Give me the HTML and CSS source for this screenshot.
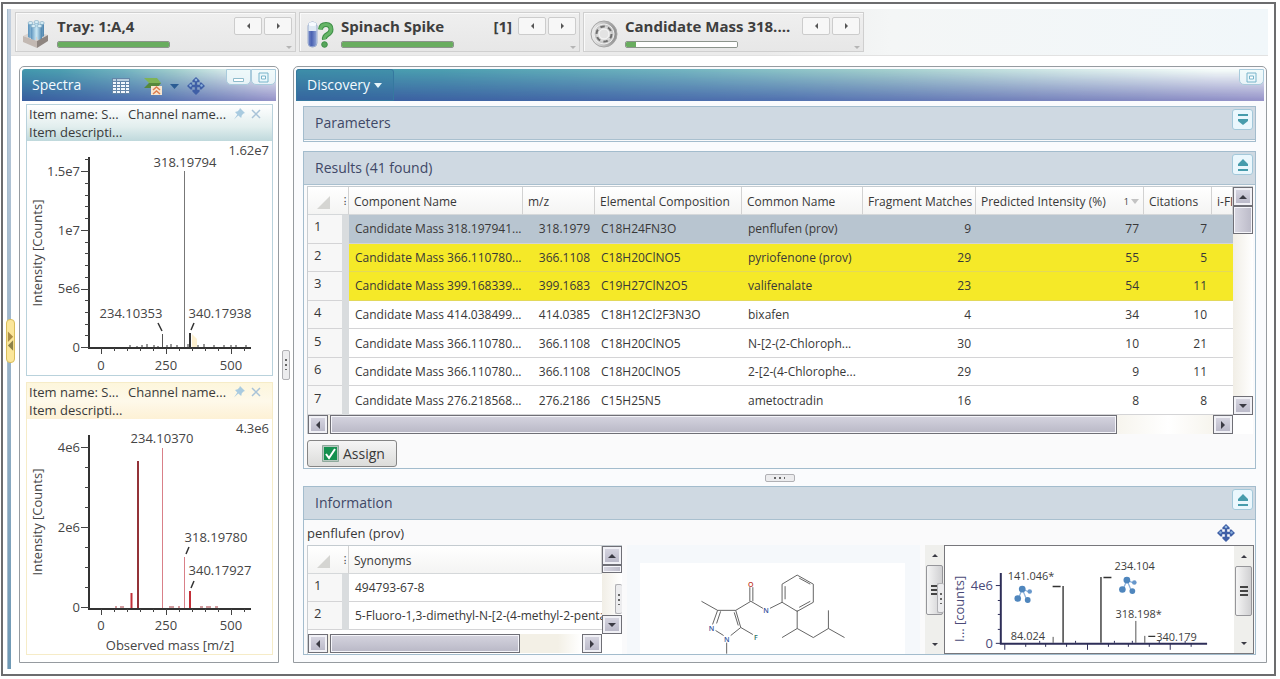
FILE: index.html
```html
<!DOCTYPE html>
<html lang="en">
<head>
<meta charset="utf-8">
<title>Discovery</title>
<link rel="stylesheet" href="styles.css">
</head>
<body>
<svg class="defs" aria-hidden="true">
  <defs>
    <linearGradient id="steel" x1="0" x2="1" y1="0" y2="0"><stop offset="0" stop-color="#f2f2f2"/><stop offset="1" stop-color="#8c8c8c"/></linearGradient>
    <linearGradient id="tube" x1="0" x2="1" y1="0" y2="0"><stop offset="0" stop-color="#5b93bd"/><stop offset=".5" stop-color="#cdeaf6"/><stop offset="1" stop-color="#4c83ad"/></linearGradient>
    <linearGradient id="vial" x1="0" x2="1" y1="0" y2="0"><stop offset="0" stop-color="#6f83c4"/><stop offset=".4" stop-color="#4a62b2"/><stop offset="1" stop-color="#8ea2d4"/></linearGradient>
    <symbol id="move" viewBox="0 0 18 18">
      <path d="M9 2v14M2 9h14" stroke="#3f5fa6" stroke-width="2.4"/>
      <path d="M9 0l3.6 3.6v1.6H5.4V3.6zM9 18l3.6-3.600v-1.600H5.400v1.600zM0 9l3.600-3.600h1.600v7.200H3.600zM18 9l-3.600-3.600h-1.600v7.200h1.600z" fill="#3f5fa6"/>
      <circle cx="9" cy="3" r="1.300" fill="#8db3dd"/><circle cx="3.500" cy="8.500" r="1.200" fill="#8db3dd"/><circle cx="14.500" cy="8.500" r="1.200" fill="#8db3dd"/>
    </symbol>
    <symbol id="pin" viewBox="0 0 12 12"><path d="M7 0l5 5-1.500.6L8.800 7.300 8.200 10 5.300 7.500 1 11.500 4.300 6.600 2 4l2.700-.7L6.400 1.600z" fill="#a9cbe0"/></symbol>
    <symbol id="cross" viewBox="0 0 10 10"><path d="M1 1l8 8M9 1L1 9" stroke="#a9c3d8" stroke-width="1.500"/></symbol>
    <symbol id="maximize" viewBox="0 0 11 11"><path d="M1 1h9v9H1z" fill="#eaf7fb" stroke="#78b4ca"/><path d="M3.500 4h4v3h-4z" fill="#fff" stroke="#78b4ca"/></symbol>
    <symbol id="cluster" viewBox="0 0 18 18">
      <path d="M8 4L4 14M8 4l5 12M8 4l7 3" stroke="#8fb4dc" stroke-width="1.300"/>
      <circle cx="8" cy="4" r="3.400" fill="#4f86bd"/><circle cx="3.500" cy="13.500" r="3.300" fill="#4f86bd"/><circle cx="13.500" cy="15" r="2.900" fill="#4f86bd"/><circle cx="15.500" cy="6.500" r="2.300" fill="#6797cb"/>
    </symbol>
  </defs>
</svg>

<div class="app">
  <div class="rail"><button class="rail-handle" aria-label="Expand side bar"><svg viewBox="0 0 8 30"><path d="M1 9v12l6-6z" fill="#ab8d45" transform="translate(0 -5)"/><path d="M7 9v12l-6-6z" fill="#8d8249" transform="translate(0 5)"/></svg></button></div>
  <div class="main">
    <header class="toolbar">
      <section class="context">
        <svg class="context-icon" viewBox="0 0 28 28">
          <path d="M1 16l10-5 15 4-11 6z" fill="#d9d3cf"/><path d="M6 3v14q2.500 2 5 0V3zM12 2v14q2.500 2 5 0V2zM18 3v13q2 2 4 0V3z" fill="url(#tube)"/><path d="M9 6v14q2.500 2 5 0V6zM15 6v13q2.500 2 5 0V6z" fill="url(#tube)"/>
          <path d="M1 16l14 5v7L1 22z" fill="#c3b9b3"/><path d="M15 21l11-6v6l-11 7z" fill="#8e8580"/>
          <g fill="#d9eef6" stroke="#7ba4bd" stroke-width=".6"><ellipse cx="8.500" cy="3" rx="2.500" ry="1.500"/><ellipse cx="14.500" cy="2" rx="2.500" ry="1.500"/><ellipse cx="20" cy="3" rx="2.200" ry="1.500"/><ellipse cx="11.500" cy="6" rx="2.500" ry="1.500"/><ellipse cx="17.500" cy="6" rx="2.500" ry="1.500"/></g>
        </svg>
        <div class="context-text"><div class="context-name"><b>Tray: 1:A,4</b></div><progress class="meter" max="100" value="100" aria-label="Tray"></progress></div>
        <div class="context-nav"><div class="steps"><button class="step prev" aria-label="Previous tray"></button><button class="step next" aria-label="Next tray"></button></div><span class="more"></span></div>
      </section>
      <section class="context">
        <svg class="context-icon" viewBox="0 0 28 28">
          <rect x="2" y="2" width="9" height="25" rx="4" fill="#dfe9f4" stroke="#9aaccc"/><path d="M2.500 11h8v12q0 3.500-4 3.500t-4-3.500z" fill="url(#vial)"/><ellipse cx="6.500" cy="4" rx="4" ry="2" fill="#f7fbff"/>
          <path d="M14.500 9.500Q15 4.500 20 4.500t5 5q0 3-3.500 5t-3 5" fill="none" stroke="#3e8f48" stroke-width="5"/><path d="M14.500 9.500Q15 4.500 20 4.500t5 5q0 3-3.500 5t-3 5" fill="none" stroke="#66b567" stroke-width="3"/><circle cx="18.500" cy="24.500" r="2.800" fill="#56a65a" stroke="#3e8f48"/>
        </svg>
        <div class="context-text"><div class="context-name"><b>Spinach Spike</b><b>[1]</b></div><progress class="meter" max="100" value="100" aria-label="Spinach Spike"></progress></div>
        <div class="context-nav"><div class="steps"><button class="step prev" aria-label="Previous sample"></button><button class="step next" aria-label="Next sample"></button></div><span class="more"></span></div>
      </section>
      <section class="context">
        <svg class="context-icon" viewBox="0 0 28 28">
          <circle cx="14" cy="14" r="13" fill="url(#steel)" stroke="#a5a5a5"/><circle cx="14" cy="14" r="10" fill="#c9c9c9" stroke="#efefef"/><circle cx="14" cy="14" r="7.500" fill="#dadada" stroke="#6f6f6f" stroke-width="2" stroke-dasharray="4.500 3.350"/><circle cx="14" cy="14" r="5" fill="#e3e3e3" stroke="#fafafa"/>
        </svg>
        <div class="context-text"><div class="context-name"><b>Candidate Mass 318....</b></div><progress class="meter" max="100" value="9" aria-label="Candidate Mass"></progress></div>
        <div class="context-nav"><div class="steps"><button class="step prev" aria-label="Previous candidate"></button><button class="step next" aria-label="Next candidate"></button></div><span class="more"></span></div>
      </section>
    </header>

    <div class="workspace">
      <section class="panel spectra">
        <header class="panel-head">
          <h2 class="panel-title">Spectra</h2>
          <div class="tools">
            <button class="tool" aria-label="Table"><svg width="18" height="16" viewBox="0 0 18 16"><path d="M0 0h18v16H0z" fill="#6486a8"/><path d="M1 1h3v2H1zM5 1h12v2H5z" fill="#bcd0df"/><path d="M1 4h3v2H1zM5 4h3v2H5zM9 4h4v2H9zM14 4h3v2h-3zM1 7h3v2H1zM5 7h3v2H5zM9 7h4v2H9zM14 7h3v2h-3zM1 10h3v2H1zM5 10h3v2H5zM9 10h4v2H9zM14 10h3v2h-3zM1 13h3v2H1zM5 13h3v2H5zM9 13h4v2H9zM14 13h3v2h-3z" fill="#f3f8fc"/></svg></button>
            <button class="tool" aria-label="Export"><svg width="18" height="18" viewBox="0 0 18 18"><path d="M0 1h13l4 5H5z" fill="#7eb356"/><path d="M5 6h12l-4 5H0z" fill="#55883c"/><path d="M7 9h11v9H7z" fill="#f6e6d0"/><path d="M9 13l3.500-3 3.500 3M9 17l3.500-3 3.500 3" fill="none" stroke="#dc7c4d" stroke-width="1.500"/></svg></button>
            <button class="tool caret" aria-label="Export options"><svg width="9" height="5" viewBox="0 0 9 5"><path d="M0 0h9L4.500 5z" fill="#2b5c93"/></svg></button>
            <button class="tool" aria-label="Move"><svg width="18" height="18"><use href="#move"/></svg></button>
          </div>
          <div class="window-buttons"><button class="window-button" aria-label="Minimize"><svg width="11" height="11" viewBox="0 0 11 11"><path d="M.5 6.500h10v3H.5z" fill="#fff" stroke="#8fbccc"/></svg></button><button class="window-button" aria-label="Maximize"><svg width="11" height="11"><use href="#maximize"/></svg></button></div>
        </header>
        <div class="cards">
          <article class="card">
            <header class="card-head"><div class="card-line"><span class="item-name">Item name: S...</span><span>Channel name...</span><span class="card-actions"><svg width="12" height="12"><use href="#pin"/></svg><svg width="10" height="10"><use href="#cross"/></svg></span></div><div class="card-line">Item descripti...</div></header>
            <svg class="plot" viewBox="27 141 245 234">
              <path d="M89 157v191M88 348h163" stroke="#333" stroke-width="2" fill="none"/>
              <path d="M81 171.500h8M81 230.500h8M81 289.500h8M81 347.500h8M85 159.500h4M85 183.500h4M85 195.500h4M85 206.500h4M85 218.500h4M85 242.500h4M85 253.500h4M85 265.500h4M85 277.500h4M85 300.500h4M85 312.500h4M85 324.500h4M85 335.500h4M101.500 348v6M166.500 348v6M231.500 348v6M114.500 348v3M127.500 348v3M140.500 348v3M153.500 348v3M179.500 348v3M192.500 348v3M205.500 348v3M218.500 348v3M244.500 348v3" stroke="#444"/>
              <path d="M130 347v-2M137 347v-1M142 347v-2M147 347v-3M154 347v-2M158 347v-1M167 347v-2M171 347v-3M177 347v-2M188 347v-3M194 347v-4M198 347v-2M204 347v-3M214 347v-2M224 347v-2M231 347v-2M236 347v-2M246 347v-2" stroke="#333"/>
              <path d="M192 334l5 5v8h-5z" fill="#fdf0cf"/>
              <path d="M184.500 171v176" stroke="#777"/><path d="M162.500 334v13" stroke="#555"/><path d="M190 333v14" stroke="#333" stroke-width="2"/>
              <path d="M158 323l4 8M194 323l-3 7" stroke="#333" stroke-width="1.500"/>
              <g class="plot-text"><text x="269" y="155" text-anchor="end">1.62e7</text><text x="185" y="167" text-anchor="middle">318.19794</text><text x="131" y="318" text-anchor="middle">234.10353</text><text x="220" y="318" text-anchor="middle">340.17938</text>
              <g text-anchor="end"><text x="80" y="176">1.5e7</text><text x="80" y="235">1e7</text><text x="80" y="293">5e6</text><text x="80" y="352">0</text></g>
              <g text-anchor="middle"><text x="101" y="370">0</text><text x="166" y="370">250</text><text x="231" y="370">500</text><text transform="translate(42 253) rotate(-90)">Intensity [Counts]</text></g></g>
            </svg>
          </article>
          <article class="card selected">
            <header class="card-head"><div class="card-line"><span class="item-name">Item name: S...</span><span>Channel name...</span><span class="card-actions"><svg width="12" height="12"><use href="#pin"/></svg><svg width="10" height="10"><use href="#cross"/></svg></span></div><div class="card-line">Item descripti...</div></header>
            <svg class="plot" viewBox="27 419 245 235">
              <path d="M138 461v147" stroke="#933238" stroke-width="2"/><path d="M131.500 593v15M190 591v17" stroke="#c22f38" stroke-width="2"/><path d="M162.500 448v160M184.500 557v51" stroke="#d98088"/>
              <path d="M89 435v173M88 609h163" stroke="#333" stroke-width="2" fill="none"/>
              <path d="M81 447.500h8M81 527.500h8M81 607.500h8M85 467.500h4M85 487.500h4M85 507.500h4M85 547.500h4M85 567.500h4M85 587.500h4M101.500 609v6M166.500 609v6M231.500 609v6M114.500 609v3M127.500 609v3M140.500 609v3M153.500 609v3M179.500 609v3M192.500 609v3M205.500 609v3M218.500 609v3M244.500 609v3" stroke="#444"/>
              <path d="M115 607h2M120 607h4M169 607h5M178 607h2M200 607h3M206 607h5M215 607h3" stroke="#a63a40"/>
              <path d="M189 547l-3 7M194 581l-3 7" stroke="#333" stroke-width="1.500"/>
              <g class="plot-text"><text x="269" y="433" text-anchor="end">4.3e6</text><text x="162" y="443" text-anchor="middle">234.10370</text><text x="216" y="542" text-anchor="middle">318.19780</text><text x="220" y="575" text-anchor="middle">340.17927</text>
              <g text-anchor="end"><text x="80" y="452">4e6</text><text x="80" y="532">2e6</text><text x="80" y="612">0</text></g>
              <g text-anchor="middle"><text x="101" y="630">0</text><text x="166" y="630">250</text><text x="231" y="630">500</text><text x="170" y="650">Observed mass [m/z]</text><text transform="translate(42 522) rotate(-90)">Intensity [Counts]</text></g></g>
            </svg>
          </article>
        </div>
      </section>

      <div class="splitter"><span class="grip vertical"></span></div>

      <section class="panel discovery">
        <header class="panel-head">
          <button class="tab">Discovery<svg width="8" height="5" viewBox="0 0 8 5"><path d="M0 0h8L4 5z" fill="#e8f6fa"/></svg></button>
          <div class="window-buttons"><button class="window-button" aria-label="Maximize"><svg width="11" height="11"><use href="#maximize"/></svg></button></div>
        </header>
        <div class="sections">
          <section class="section collapsed">
            <header class="section-head"><h3 class="section-title">Parameters</h3><button class="fold" aria-label="Expand Parameters"><svg width="12" height="12" viewBox="0 0 12 12"><path d="M1 0h10v2H1zM1 5h10v2l-5 4-5-4z" fill="#479cac"/></svg></button></header>
          </section>
          <section class="section results">
            <header class="section-head"><h3 class="section-title">Results (41 found)</h3><button class="fold" aria-label="Collapse Results"><svg width="12" height="12" viewBox="0 0 12 12"><path d="M1 10h10v2H1zM1 5l5-5 5 5v2H1z" fill="#479cac"/></svg></button></header>
            <div class="section-body">
              <div class="grid">
                <div class="viewport">
                  <table class="table results-table">
                    <colgroup><col class="c-num"><col class="c-grip"><col class="c-name"><col class="c-mz"><col class="c-comp"><col class="c-common"><col class="c-frag"><col class="c-int"><col class="c-cit"><col class="c-fit"></colgroup>
                    <thead><tr><th class="corner"><svg width="13" height="13" viewBox="0 0 13 13"><path d="M13 0v13H0z" fill="#d5d5d2"/></svg></th><th class="dots">⁝</th><th>Component Name</th><th>m/z</th><th>Elemental Composition</th><th>Common Name</th><th>Fragment Matches</th><th><span class="sorted">Predicted Intensity (%)<span class="order">1<svg width="8" height="5" viewBox="0 0 8 5"><path d="M0 0h8L4 5z" fill="#c3c3c3"/></svg></span></span></th><th>Citations</th><th>i-FIT</th></tr></thead>
                    <tbody>
                      <tr class="picked"><td class="num">1</td><td class="rule"></td><td>Candidate Mass 318.197941...</td><td class="n">318.1979</td><td>C18H24FN3O</td><td>penflufen (prov)</td><td class="n">9</td><td class="n">77</td><td class="n">7</td><td></td></tr>
                      <tr class="marked"><td class="num">2</td><td class="rule"></td><td>Candidate Mass 366.110780...</td><td class="n">366.1108</td><td>C18H20ClNO5</td><td>pyriofenone (prov)</td><td class="n">29</td><td class="n">55</td><td class="n">5</td><td></td></tr>
                      <tr class="marked"><td class="num">3</td><td class="rule"></td><td>Candidate Mass 399.168339...</td><td class="n">399.1683</td><td>C19H27ClN2O5</td><td>valifenalate</td><td class="n">23</td><td class="n">54</td><td class="n">11</td><td></td></tr>
                      <tr><td class="num">4</td><td class="rule"></td><td>Candidate Mass 414.038499...</td><td class="n">414.0385</td><td>C18H12Cl2F3N3O</td><td>bixafen</td><td class="n">4</td><td class="n">34</td><td class="n">10</td><td></td></tr>
                      <tr><td class="num">5</td><td class="rule"></td><td>Candidate Mass 366.110780...</td><td class="n">366.1108</td><td>C18H20ClNO5</td><td>N-[2-(2-Chloroph...</td><td class="n">30</td><td class="n">10</td><td class="n">21</td><td></td></tr>
                      <tr><td class="num">6</td><td class="rule"></td><td>Candidate Mass 366.110780...</td><td class="n">366.1108</td><td>C18H20ClNO5</td><td>2-[2-(4-Chlorophe...</td><td class="n">29</td><td class="n">9</td><td class="n">11</td><td></td></tr>
                      <tr><td class="num">7</td><td class="rule"></td><td>Candidate Mass 276.218568...</td><td class="n">276.2186</td><td>C15H25N5</td><td>ametoctradin</td><td class="n">16</td><td class="n">8</td><td class="n">8</td><td></td></tr>
                    </tbody>
                  </table>
                </div>
                <div class="vscroll"><button class="sb up" aria-label="Scroll up"></button><span class="thumb"></span><span class="track"></span><button class="sb down" aria-label="Scroll down"></button></div>
                <div class="hscroll"><button class="sb left" aria-label="Scroll left"></button><span class="thumb"></span><span class="track"></span><button class="sb right" aria-label="Scroll right"></button></div>
              </div>
              <button class="assign"><svg width="17" height="17" viewBox="0 0 17 17"><path d="M.5.500h16v16H.5z" fill="#b5c8be" stroke="#8fa99c"/><path d="M2 2h13v13H2z" fill="#15904f"/><path d="M4 9l3 4 6-9" fill="none" stroke="#fff" stroke-width="2"/></svg>Assign</button>
            </div>
          </section>
          <div class="row-splitter"><span class="grip"></span></div>
          <section class="section info">
            <header class="section-head"><h3 class="section-title">Information</h3><button class="fold" aria-label="Collapse Information"><svg width="12" height="12" viewBox="0 0 12 12"><path d="M1 10h10v2H1zM1 5l5-5 5 5v2H1z" fill="#479cac"/></svg></button></header>
            <div class="info-bar"><span>penflufen (prov)</span><button class="tool" aria-label="Move"><svg width="18" height="18"><use href="#move"/></svg></button></div>
            <div class="info-panes">
              <div class="grid synonyms">
                <div class="viewport">
                  <table class="table">
                    <colgroup><col class="c-num"><col class="c-grip"><col></colgroup>
                    <thead><tr><th class="corner"><svg width="13" height="13" viewBox="0 0 13 13"><path d="M13 0v13H0z" fill="#d5d5d2"/></svg></th><th class="dots">⁝</th><th>Synonyms</th></tr></thead>
                    <tbody><tr><td class="num">1</td><td class="rule"></td><td>494793-67-8</td></tr><tr><td class="num">2</td><td class="rule"></td><td>5-Fluoro-1,3-dimethyl-N-[2-(4-methyl-2-pentanyl)phenyl]</td></tr></tbody>
                  </table>
                </div>
                <div class="vscroll"><button class="sb up" aria-label="Scroll up"></button><span class="thumb"></span><span class="track"></span><button class="sb down" aria-label="Scroll down"></button><span class="grip vertical over"></span></div>
                <div class="hscroll"><button class="sb left" aria-label="Scroll left"></button><span class="thumb"></span><span class="track"></span><button class="sb right" aria-label="Scroll right"></button></div>
              </div>
              <div class="structure">
                <div class="canvas">
                  <svg class="molecule" viewBox="641 564 263 90">
                    <path fill="none" stroke="#555" stroke-width=".9" d="M702 602l16 9h18M718 611l-5 14M721 612l-4 12M716 631l8 5M731 636l10-8-5-17M738.500 626l-4-13M741 628l12 7M727 643v11M736 611l15-9M750 602v-14M753 602v-14M751 602l12 7M770 609l12-6M782 603v-18l15-9 16 9v18l-16 9zM785 600v-13M799 579l11 6M799 608l11-6M797 611v18l-15 9M797 629l16 9 15-9v-18M828 629l16 9"/>
                    <g class="atoms"><text x="751" y="588" fill="#c0392b">O</text><text x="766" y="614" fill="#34519b">N</text><text x="712" y="632" fill="#34519b">N</text><text x="727" y="642" fill="#34519b">N</text><text x="756" y="640" fill="#2d7266">F</text></g>
                  </svg>
                </div>
                <div class="slim"><button class="slim-button up" aria-label="Scroll up"></button><span class="slim-thumb"></span><button class="slim-button down" aria-label="Scroll down"></button><span class="grip vertical over"></span></div>
              </div>
              <div class="fragments">
                <svg class="plot" viewBox="945 546 290 107">
                  <path d="M1001 573v71M1000 644h208" stroke="#2e2e58" stroke-width="2" fill="none"/>
                  <path d="M996 585.500h5M996 643.500h5M998 600.500h3M998 614.500h3M998 629.500h3M1005 644v6M1026 644v3M1046 644v3M1067 644v3M1088 644v6M1109 644v3M1129 644v3M1150 644v3M1171 644v6M1192 644v3M1040 643v-2M1076 643v-2M1115 643v-2M1133 643v-2M1160 643v-2M1186 643v-2" stroke="#2e2e58"/>
                  <path d="M1063.500 586v57M1101.500 577v66" stroke="#444" stroke-width="1.500"/><path d="M1136.500 621v22M1145.500 636v7M1053.500 637v6" stroke="#555"/><path d="M1053 586.500h8M1104 577.500h8M1149 636.500h7" stroke="#333" stroke-width="1.500"/>
                  <use href="#cluster" x="1014" y="585" width="19" height="18"/><use href="#cluster" x="1119" y="576" width="19" height="18"/>
                  <g class="peak-text"><text x="1008" y="580">141.046*</text><text x="1115" y="570">234.104</text><text x="1116" y="618">318.198*</text><text x="1011" y="640">84.024</text><text x="1157" y="641">340.179</text></g>
                  <g class="plot-text axis"><text x="993" y="590" text-anchor="end">4e6</text><text x="993" y="648" text-anchor="end">0</text><text transform="translate(964 609) rotate(-90)" text-anchor="middle">I... [counts]</text></g>
                </svg>
                <div class="slim"><button class="slim-button up" aria-label="Scroll up"></button><span class="slim-thumb"></span><button class="slim-button down" aria-label="Scroll down"></button></div>
              </div>
            </div>
          </section>
        </div>
      </section>
    </div>
  </div>
</div>
</body>
</html>
```
FILE: styles.css
```css
* { box-sizing: border-box; }
body { margin: 0; background: #fff; color: #383838; font: 13px/18px "Open Sans", "Noto Sans", sans-serif; }
button { margin: 0; padding: 0; border: 0; background: none; color: inherit; font: inherit; }
h2, h3 { margin: 0; font-weight: 400; }
svg { display: block; flex: none; }
.defs { position: absolute; width: 0; height: 0; }

.app { display: flex; min-height: calc(100vh - 5px); margin: 2px 4px 0 1px; padding: 5px 6px 5px 4px; border: 2px solid #6c6c6e; }
.rail { position: relative; flex: none; width: 4px; background: linear-gradient(#c3d0df, #9db5c9 50%, #6e98b4); border-left: 1px solid #a7bccd; }
.rail-handle { position: absolute; top: 310px; left: -2px; width: 9px; height: 44px; border: 1px solid #d9bd5c; border-radius: 4px; background: #fbe69a; z-index: 1; }
.rail-handle svg { width: 7px; height: 30px; }
.main { display: flex; flex-direction: column; flex: 1; min-width: 0; }

.toolbar { display: flex; gap: 3px; height: 47px; padding: 3px 4px; background: linear-gradient(90deg, #ebebeb 60%, #f4f6f6 70%, #f1f7fa); border-bottom: 1px solid #e2e2e2; }
.context { display: flex; width: 281px; padding: 4px 3px 0 6px; border: 1px solid #cfcfcf; box-shadow: inset 1px 1px #fafafa; background: linear-gradient(#efefef, #e7e7e7); }
.context-icon { width: 28px; height: 28px; margin: 3px 7px 0 0; }
.context-text { flex: 1; min-width: 0; }
.context-name { display: flex; justify-content: space-between; height: 20px; padding-right: 6px; color: #3e3e3e; font-size: 15px; line-height: 18px; white-space: nowrap; }
.meter { display: block; width: 113px; height: 7px; margin-top: 4px; appearance: none; border: 1px solid #8c948c; border-radius: 2px; overflow: hidden; background: #fff; }
.meter::-webkit-progress-bar { background: #fff; }
.meter::-webkit-progress-value { background: #69ad5f; }
.context-nav { display: flex; flex-direction: column; align-items: flex-end; }
.steps { display: flex; gap: 2px; }
.step { display: grid; place-items: center; width: 28px; height: 18px; border: 1px solid #cccccc; border-radius: 2px; background: #f7f7f7; }
.step::before { content: ""; border: 3px solid transparent; }
.prev::before { border-right-color: #555; border-left-width: 0; }
.next::before { border-left-color: #555; border-right-width: 0; }
.more { margin-top: 11px; border: 3px solid transparent; border-top-color: #b5b5b5; border-bottom-width: 0; }

.workspace { display: flex; padding: 10px 1px 0 8px; margin-bottom: 5px; }
.panel { border: 1px solid #969ba0; border-radius: 5px 5px 0 0; padding: 2px; background: #fff; }
.spectra { width: 260px; flex: none; }
.discovery { flex: 1; min-width: 0; background: #fafbfd; }
.panel-head { position: relative; z-index: 0; display: flex; height: 32px; border-radius: 3px 3px 0 0; color: #f3fbff; background: linear-gradient(90deg, #4297ad, #4c9db0 15%, #72b3c0 40%, #9fcccc 60%, #d3e8e8 80%, #f3faf9 95%); }
.panel-head::before { content: ""; position: absolute; z-index: -1; inset: 0; background: linear-gradient(90deg, #385f9f, #4268a6 25%, #5273b0 50%, #7684bc 75%, #9896ca); mask-image: linear-gradient(transparent 5%, #000 95%); }
.panel-title { width: 90px; padding-left: 10px; font-size: 14px; line-height: 32px; }
.tools { display: flex; align-items: center; gap: 8px; padding-top: 2px; }
.tools .tool:first-child { margin-right: 6px; }
.window-buttons { display: flex; margin-left: auto; }
.window-button { display: grid; place-items: center; width: 25px; height: 16px; border: 1px solid #a9cbdc; border-radius: 0 0 5px 5px; background: rgba(240,250,252,.85); }
.cards { display: flex; flex-direction: column; gap: 6px; padding: 3px 3px 4px 4px; }
.card { border: 1px solid #b9d2dc; }
.card-head { padding: 0 5px 0 2px; color: #3a3a3a; background: linear-gradient(#fff, #e2eeee 60%, #bfd9dc); }
.card-line { display: flex; height: 18px; align-items: center; }
.item-name { width: 99px; }
.card-actions { display: flex; align-items: center; gap: 6px; margin-left: auto; padding-right: 6px; }
.selected { border-color: #f6ecc8; }
.selected .card-head { background: linear-gradient(#fdf6dc, #fef9ea 50%, #fdf1d5); }
.plot { width: 100%; height: auto; }
.plot-text { fill: #454545; font-size: 13px; }
.peak-text { fill: #3d3d3d; font-size: 11px; }
.axis { fill: #4a4a78; }

.splitter { display: flex; align-items: center; justify-content: center; width: 14px; flex: none; }
.grip { position: relative; display: grid; place-items: center; width: 30px; height: 8px; border: 1px solid #b0b0b4; border-radius: 2px; background: #ececee; }
.grip::before { content: ""; width: 11px; height: 2px; background: repeating-linear-gradient(90deg, #666 0 2px, transparent 2px 5px); }
.grip.vertical { width: 8px; height: 30px; }
.grip.vertical::before { width: 2px; height: 11px; background: repeating-linear-gradient(#666 0 2px, transparent 2px 5px); }
.grip.over { position: absolute; right: 0; top: 38px; width: 7px; border-right: 0; }

.tab { display: flex; align-items: center; gap: 4px; width: 98px; padding-left: 10px; border: 1px solid #35789f; border-radius: 3px 3px 0 0; background: rgba(50,120,160,.3); font-size: 14px; }
.sections { padding: 5px 8px 5px 7px; }
.section { border: 1px solid #a3bccd; background: #fafafb; }
.section-head { display: flex; align-items: center; justify-content: space-between; height: 33px; padding: 0 2px 0 11px; border-bottom: 1px solid #a9c0cf; background: #cfd9e2; }
.section-title { color: #3f4867; font-size: 14px; }
.collapsed { margin-bottom: 9px; padding-bottom: 1px; }
.fold { display: grid; place-items: center; width: 21px; height: 21px; margin-bottom: 7px; border: 1px solid #a3c8da; border-radius: 3px; background: #eaf7fd; }
.section-body { padding: 1px 2px 1px 3px; }
.grid { display: grid; grid-template-columns: minmax(0, 1fr) 20px; border-top: 1px solid #c4cbd0; border-left: 1px solid #c8cdd1; background: #fff; }
.viewport { overflow: hidden; }
.table { width: 100%; border-collapse: separate; border-spacing: 0; table-layout: fixed; font-size: 12px; line-height: 18px; }
.results-table { height: 228px; }
.c-num { width: 34px; } .c-grip { width: 7px; } .c-name { width: 174px; } .c-mz { width: 72px; } .c-comp { width: 147px; } .c-common { width: 121px; } .c-frag { width: 113px; } .c-int { width: 168px; } .c-cit { width: 68px; } .c-fit { width: auto; }
.table th { height: 28px; padding: 2px 0 0 5px; border-right: 1px solid #d2d2d2; border-bottom: 1px solid #d5d8da; background: linear-gradient(#fff, #f4f4f3); font-weight: 400; text-align: left; white-space: nowrap; overflow: hidden; }
.table td { height: 28px; padding: 1px 5px 0 6px; border-bottom: 1px solid #d4d4d6; white-space: nowrap; overflow: hidden; }
.table .corner { padding: 4px 0 0 9px; border-right: 0; }
.table .dots { padding: 0; font-size: 10px; text-align: center; overflow: visible; }
.table .num { padding: 0 0 5px 6px; background: #f7f7f7; font-size: 13px; }
.table .rule { padding: 0; background: #d9dcde; border-color: #d9dcde; }
.table .n { text-align: right; }
.sorted, .order { display: flex; align-items: center; justify-content: space-between; }
.order { gap: 2px; padding-right: 4px; font-size: 9px; }
.picked td { background: #b8c5d0; }
.marked td { background: #f5e928; border-bottom-color: #e3d95a; }
.marked .num { border-bottom-color: #d4d4d6; }

.vscroll { position: relative; display: flex; flex-direction: column; background: linear-gradient(90deg, #f1eee6, #fff); }
.hscroll { display: flex; grid-column: 1; height: 19px; background: linear-gradient(90deg, #f3f0e6 85%, #fff 93%, #f3f0e6); }
.thumb { border: 1px solid #6f6f76; box-shadow: inset 0 0 0 1px #f5f5fa; background: linear-gradient(#d5d4df, #b9b8c6); }
.hscroll .thumb { margin-left: 2px; flex: 788; }
.hscroll .track { flex: 96; }
.vscroll .thumb { height: 28px; background: linear-gradient(90deg, #d9d8e2, #bbbac8); }
.vscroll .track { flex: 1; }
.sb { display: grid; place-items: center; flex: none; width: 20px; height: 19px; border: 1px solid #6f6f76; box-shadow: inset 0 0 0 2px #f1f1f6; background: linear-gradient(#d9d8e3, #b7b6c6); }
.sb::before, .slim-button::before { content: ""; border: 4px solid transparent; }
.up::before { border-bottom-color: #3b3b44; border-top-width: 0; }
.down::before { border-top-color: #3b3b44; border-bottom-width: 0; }
.left::before { border-right-color: #3b3b44; border-left-width: 0; }
.right::before { border-left-color: #3b3b44; border-right-width: 0; }
.assign { display: flex; align-items: center; gap: 4px; width: 90px; height: 27px; margin-top: 6px; padding-left: 14px; border: 1px solid #858585; border-radius: 3px; background: linear-gradient(#f5f5f5, #dcdcda); font-size: 14px; }

.row-splitter { display: flex; align-items: center; justify-content: center; height: 17px; }
.info-bar { display: flex; align-items: center; justify-content: space-between; height: 25px; padding: 0 20px 0 3px; }
.info-panes { display: grid; grid-template-columns: 315fr 322fr 310fr; height: 109px; padding: 0 1px 0 3px; }
.synonyms { grid-template-rows: minmax(0, 1fr) 20px; min-height: 0; }
.synonyms .hscroll .thumb { flex: 191; }
.synonyms .hscroll .track { flex: 63; }
.synonyms .vscroll .thumb { height: 8px; }
.structure { display: flex; min-width: 0; padding-left: 5px; }
.canvas { flex: 1; min-width: 0; margin-right: 5px; padding: 18px 15px 0 13px; background: #f5f8fb; }
.molecule { width: 100%; height: auto; background: #fff; }
.atoms { font-size: 7px; font-weight: 600; text-anchor: middle; }
.fragments { display: flex; min-width: 0; border: 1px solid #77777c; background: #fff; }
.fragments .plot { flex: 1; min-width: 0; }
.slim { position: relative; display: flex; flex-direction: column; width: 19px; flex: none; background: #efefec; }
.slim-button { display: grid; place-items: center; height: 20px; }
.slim-button::before { border-width: 3px; }
.slim-button.up::before { border-top-width: 0; }
.slim-button.down::before { border-bottom-width: 0; }
.slim-thumb { display: grid; place-items: center; height: 50px; margin: 0 1px; border: 1px solid #96969a; border-radius: 2px; background: linear-gradient(90deg, #f5f5f5, #d0d0d2); }
.slim-thumb::before { content: ""; width: 8px; height: 10px; background: repeating-linear-gradient(#444 0 2px, transparent 2px 4px); }
.slim .down { margin-top: auto; }
```
